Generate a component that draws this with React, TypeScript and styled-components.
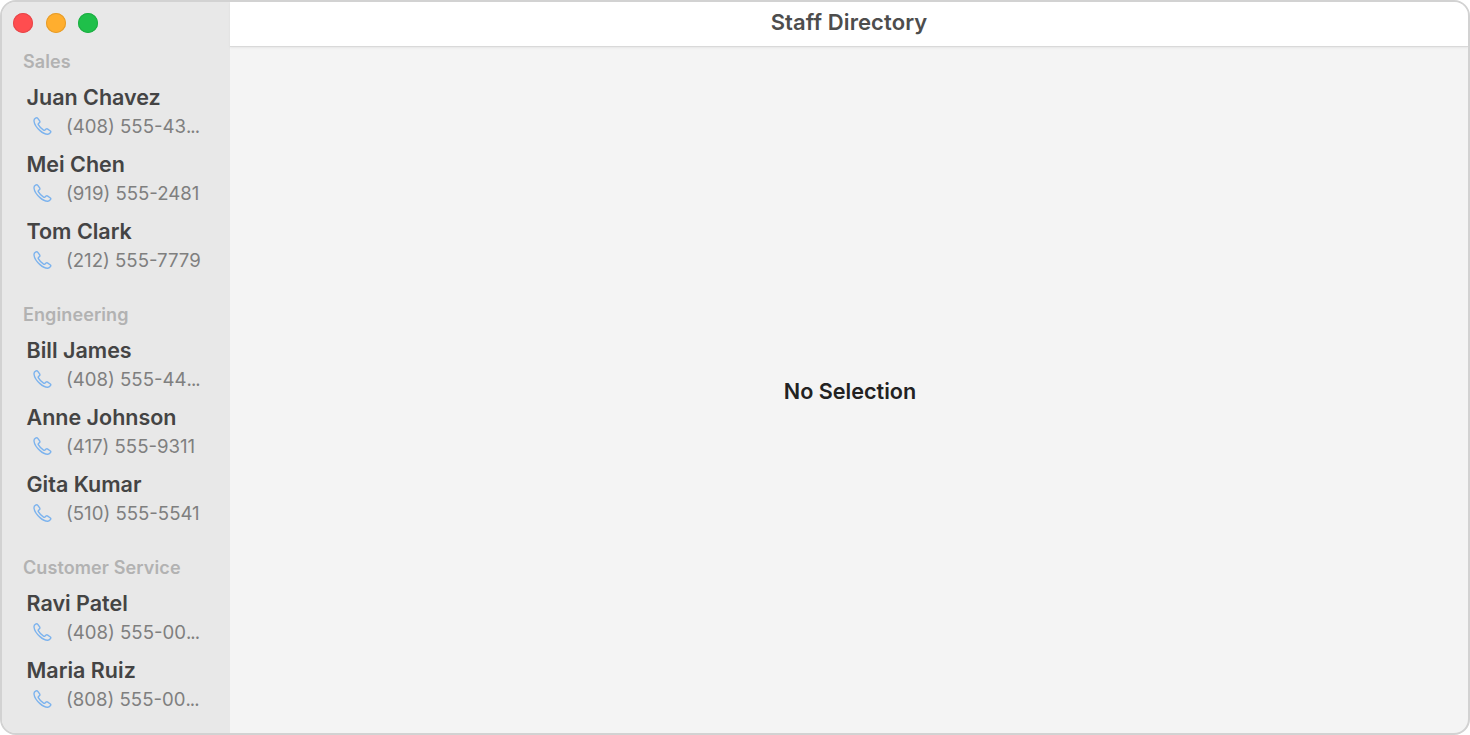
import React from "react";
import styled, { createGlobalStyle } from "styled-components";

const Global = createGlobalStyle`
  html, body { margin: 0; padding: 0; height: 100%; background: #fff; overflow: hidden; }
  #root { height: 100%; }
  * { box-sizing: border-box; }
`;

const Win = styled.div`
  width: 1470px;
  height: 735px;
  display: flex;
  border: 2px solid #d2d2d2;
  border-radius: 16px;
  overflow: hidden;
  font-family: Inter, "Liberation Sans", sans-serif;
  background: #f4f4f4;
`;

const Sidebar = styled.aside`
  width: 228px;
  flex: none;
  background: #e8e8e8;
  padding: 11px 0 0 10px;
`;

const Traffic = styled.div`
  display: flex;
  gap: 12.5px;
  height: 20px;
  margin-left: 1px;
  margin-bottom: 19px;
`;

const Light = styled.span<{ $c: string; $b: string }>`
  width: 20px;
  height: 20px;
  border-radius: 50%;
  background: ${(p) => p.$c};
  box-shadow: inset 0 0 0 1px ${(p) => p.$b};
`;

const Section = styled.section`
  height: 253px;
`;

const SectionLabel = styled.div`
  height: 20px;
  line-height: 20px;
  margin-left: 11px;
  margin-bottom: 10px;
  font-size: 18px;
  letter-spacing: 0.1px;
  font-weight: 600;
  color: #b2b2b2;
`;

const Row = styled.div`
  height: 67px;
  padding-left: 14.5px;
`;

const Name = styled.div`
  height: 30px;
  line-height: 30px;
  font-size: 21.5px;
  font-weight: 600;
  color: #444;
  white-space: nowrap;
`;

const PhoneRow = styled.div`
  display: flex;
  align-items: center;
  height: 28px;
  padding-left: 5.5px;
  gap: 14px;
  color: #7cb3ee;
`;

const Num = styled.span`
  font-size: 18.6px;
  color: #7f7f7f;
  white-space: nowrap;
  width: 137px;
  overflow: hidden;
`;

const Dots = styled.span`
  letter-spacing: -1px;
`;

const Main = styled.main`
  flex: 1;
  display: flex;
  flex-direction: column;
`;

const Header = styled.header`
  height: 45px;
  flex: none;
  background: #fff;
  border-bottom: 1px solid #d9d9d9;
  box-shadow: 0 1px 2px rgba(0, 0, 0, 0.06);
  display: flex;
  align-items: center;
  justify-content: center;
  padding: 0 0 4px 0;
  font-size: 22px;
  letter-spacing: 0.1px;
  font-weight: 600;
  color: #4d4d4d;
`;

const Empty = styled.div`
  flex: 1;
  display: flex;
  align-items: center;
  justify-content: center;
  padding: 2px 0 0 2px;
  font-size: 21.6px;
  font-weight: 600;
  color: #222;
`;

const PhoneIcon = () => (
  <svg width="20" height="20" viewBox="0 0 20 20" fill="none" stroke="currentColor" strokeWidth="1.4" strokeLinecap="round" strokeLinejoin="round">
    <path d="M3.6 2.2 C2.6 2.8 1.9 3.7 2 5 C2.3 8 5 12 8 14.6 C10.5 16.8 13.6 18.4 15.9 18.2 C17 18.1 18 17.3 18.6 16.3 C18.9 15.8 18.8 15.3 18.4 15 L15.4 12.9 C15 12.6 14.5 12.7 14.1 13 L12.8 14.1 C12.4 14.4 12 14.4 11.6 14.2 C9.6 13 7.6 11 6.3 8.7 C6.1 8.3 6.2 7.9 6.5 7.6 L7.6 6.5 C8 6.1 8 5.7 7.8 5.2 L5.8 2.4 C5.3 1.8 4.4 1.7 3.6 2.2 Z" />
  </svg>
);

type Person = { name: string; phone: string; cut?: boolean };

const data: { t: string; p: Person[] }[] = [
  {
    t: "Sales",
    p: [
      { name: "Juan Chavez", phone: "(408) 555-43", cut: true },
      { name: "Mei Chen", phone: "(919) 555-2481" },
      { name: "Tom Clark", phone: "(212) 555-7779" },
    ],
  },
  {
    t: "Engineering",
    p: [
      { name: "Bill James", phone: "(408) 555-44", cut: true },
      { name: "Anne Johnson", phone: "(417) 555-9311" },
      { name: "Gita Kumar", phone: "(510) 555-5541" },
    ],
  },
  {
    t: "Customer Service",
    p: [
      { name: "Ravi Patel", phone: "(408) 555-00", cut: true },
      { name: "Maria Ruiz", phone: "(808) 555-00", cut: true },
    ],
  },
];

export default function App() {
  return (
    <Win>
      <Global />
      <Sidebar>
        <Traffic>
          <Light $c="#ff4d4f" $b="#e5484b" />
          <Light $c="#ffae2e" $b="#e59d2c" />
          <Light $c="#1fc04a" $b="#1eae44" />
        </Traffic>
        {data.map((s) => (
          <Section key={s.t}>
            <SectionLabel>{s.t}</SectionLabel>
            {s.p.map((x) => (
              <Row key={x.name}>
                <Name>{x.name}</Name>
                <PhoneRow>
                  <PhoneIcon />
                  <Num>
                    {x.phone}
                    {x.cut && <Dots>...</Dots>}
                  </Num>
                </PhoneRow>
              </Row>
            ))}
          </Section>
        ))}
      </Sidebar>
      <Main>
        <Header>Staff Directory</Header>
        <Empty>No Selection</Empty>
      </Main>
    </Win>
  );
}
